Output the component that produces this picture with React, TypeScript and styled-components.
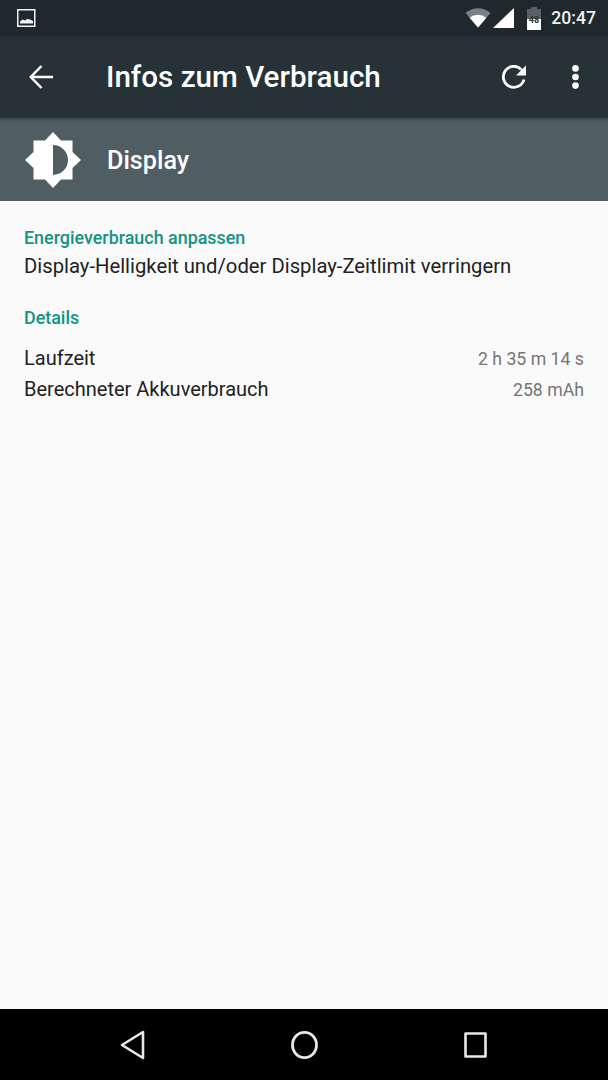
import React from 'react';
import styled, {createGlobalStyle} from 'styled-components';

const GlobalStyle = createGlobalStyle`
    html, body {
        margin: 0;
        padding: 0;
        height: 100%;
        background: #fafafa;
        font-family: Roboto, "Noto Sans", sans-serif;
    }
`;

const Screen = styled.div`
    display: flex;
    flex-direction: column;
    width: 608px;
    height: 1080px;
    overflow: hidden;
`;

const StatusBar = styled.div`
    display: flex;
    align-items: center;
    justify-content: space-between;
    height: 36px;
    padding: 0 12px 0 17px;
    background: #1f282c;
    color: #fff;
`;

const StatusRight = styled.div`
    display: flex;
    align-items: center;
`;

const Clock = styled.span`
    margin-left: 10px;
    font-size: 17.6px;
    font-weight: 500;
    color: #eef0f0;
`;

const Toolbar = styled.div`
    display: flex;
    align-items: center;
    height: 82px;
    padding: 0 29px;
    background: #263238;
    color: #fff;
    box-shadow: 0 2px 3px rgba(0, 0, 0, 0.25);
    position: relative;
`;

const Title = styled.h1`
    flex: 1;
    margin: 0 0 0 53px;
    font-size: 29.6px;
    font-weight: 500;
    line-height: 82px;
`;

const ToolIcons = styled.div`
    display: flex;
    align-items: center;
    gap: 46px;
`;

const AppHeader = styled.div`
    display: flex;
    align-items: center;
    height: 83px;
    padding-left: 25px;
    background: #505e64;
    color: #fff;
`;

const AppName = styled.span`
    margin: 2px 0 0 26px;
    font-size: 25.2px;
    font-weight: 500;
`;

const Content = styled.main`
    flex: 1;
    padding: 27px 24px 0;
    background: #fafafa;
`;

const SectionLabel = styled.div<{$gap?: number}>`
    margin-top: ${p => p.$gap ?? 0}px;
    font-size: 17.9px;
    font-weight: 500;
    line-height: 20px;
    color: #139382;
`;

const BodyText = styled.div`
    margin-top: 4px;
    font-size: 20.25px;
    line-height: 28px;
    color: #212121;
`;

const DetailRows = styled.div`
    display: flex;
    flex-direction: column;
    gap: 2px;
    margin-top: 16px;
`;

const DetailRow = styled.div`
    display: flex;
    justify-content: space-between;
    align-items: baseline;
    line-height: 28px;
`;

const DetailName = styled.span`
    font-size: 20px;
    color: #212121;
`;

const DetailValue = styled.span`
    font-size: 17.7px;
    color: #757575;
`;

const NavBar = styled.nav`
    display: flex;
    align-items: center;
    justify-content: center;
    gap: 146px;
    height: 71px;
    padding-right: 1px;
    background: #000;
`;

const details = [
    {name: 'Laufzeit', value: '2 h 35 m 14 s'},
    {name: 'Berechneter Akkuverbrauch', value: '258 mAh'},
];

const App: React.FC = () => (
    <Screen>
        <GlobalStyle />
        <StatusBar>
            <svg width="19" height="19" viewBox="0 0 19 19">
                <rect x="0.75" y="0.75" width="17" height="16.5" fill="none" stroke="#f2f2f2" strokeWidth="1.5" />
                <path d="M3 14.5 L3 12.5 L5.5 10.5 L8 11.5 L10 10 L13 10.5 L16 12 L16 14.5Z" fill="#f2f2f2" />
            </svg>
            <StatusRight>
                <svg width="26" height="20" viewBox="0 0 26 20">
                    <path d="M0.5 5 A19 19 0 0 1 25.5 5 L13 19.5Z" fill="#7b8082" />
                    <path d="M4.6 9.8 A13 13 0 0 1 21.4 9.8 L13 19.5Z" fill="#fff" />
                </svg>
                <svg width="21" height="20" viewBox="0 0 21 20" style={{marginLeft: 2}}>
                    <path d="M21 0 V20 H0Z" fill="#fff" />
                </svg>
                <svg width="14" height="23" viewBox="0 0 14 23" style={{marginLeft: 13}}>
                    <path d="M4 0 H10 V2 H14 V23 H0 V2 H4Z" fill="#5a6163" />
                    <path d="M0 12 H14 V23 H0Z" fill="#fff" />
                    <text x="7" y="15.5" textAnchor="middle" fontSize="9" fontWeight="700" fontFamily="Roboto" fill="#2a3236">48</text>
                </svg>
                <Clock>20:47</Clock>
            </StatusRight>
        </StatusBar>
        <Toolbar>
            <svg width="24" height="24" viewBox="0 0 24 24" fill="none" stroke="#fff" strokeWidth="2.5">
                <path d="M24 12 H2.5 M12.5 1 L1.8 12 L12.5 23" />
            </svg>
            <Title>Infos zum Verbrauch</Title>
            <ToolIcons>
                <svg width="24" height="24" viewBox="0 0 24 24" fill="none">
                    <path d="M19.5 4.6 A10.5 10.5 0 1 0 22 14.5" stroke="#fff" strokeWidth="2.8" />
                    <path d="M24 0.5 V10.5 H14Z" fill="#fff" />
                </svg>
                <svg width="7" height="24" viewBox="0 0 7 24" fill="#fff">
                    <circle cx="3.5" cy="3.4" r="3.3" />
                    <circle cx="3.5" cy="12" r="3.3" />
                    <circle cx="3.5" cy="20.6" r="3.3" />
                </svg>
            </ToolIcons>
        </Toolbar>
        <AppHeader>
            <svg width="56" height="56" viewBox="0 0 56 56">
                <path
                    fillRule="evenodd"
                    fill="#fff"
                    d="M28 0 L36 8.5 H47.5 V20 L56 28 L47.5 36 V47.5 H36 L28 56 L20 47.5 H8.5 V36 L0 28 L8.5 20 V8.5 H20Z M28 13 V43 A15 15 0 0 0 28 13Z"
                />
            </svg>
            <AppName>Display</AppName>
        </AppHeader>
        <Content>
            <SectionLabel>Energieverbrauch anpassen</SectionLabel>
            <BodyText>Display-Helligkeit und/oder Display-Zeitlimit verringern</BodyText>
            <SectionLabel $gap={28}>Details</SectionLabel>
            <DetailRows>
                {details.map(d => (
                    <DetailRow key={d.name}>
                        <DetailName>{d.name}</DetailName>
                        <DetailValue>{d.value}</DetailValue>
                    </DetailRow>
                ))}
            </DetailRows>
        </Content>
        <NavBar>
            <svg width="25" height="30" viewBox="0 0 25 30" fill="none" stroke="#e8e8e8" strokeWidth="2.6" strokeLinejoin="round">
                <path d="M23 2 V28 L2 15Z" />
            </svg>
            <svg width="27" height="30" viewBox="0 0 27 30" fill="none" stroke="#e8e8e8" strokeWidth="2.8">
                <ellipse cx="13.5" cy="15" rx="12" ry="12.6" />
            </svg>
            <svg width="23" height="26" viewBox="0 0 23 26" fill="none" stroke="#e8e8e8" strokeWidth="2.6" strokeLinejoin="round">
                <rect x="1.5" y="1.5" width="20" height="23" />
            </svg>
        </NavBar>
    </Screen>
);

export default App;
